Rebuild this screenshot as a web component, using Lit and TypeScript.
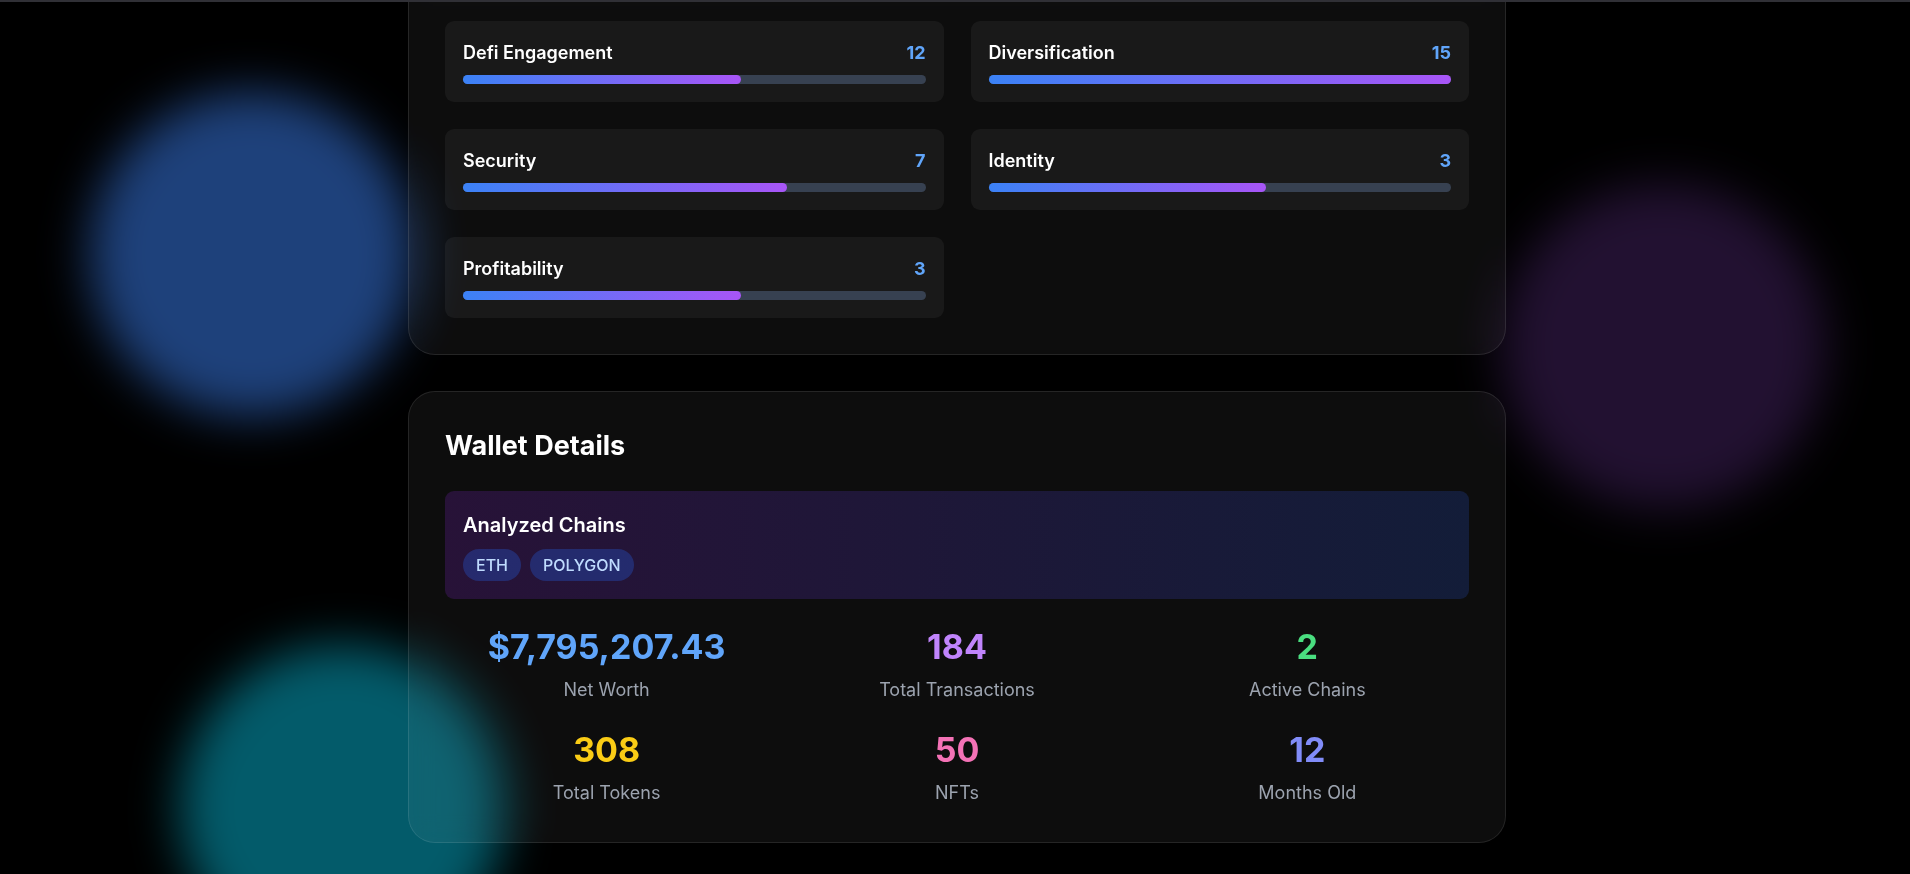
import { LitElement, html, css } from "lit";
import { customElement, property } from "lit/decorators.js";
import { classMap } from "lit/directives/class-map.js";

interface Score {
  label: string;
  value: number;
  max: number;
}

interface Stat {
  label: string;
  value: string;
  tone: string;
}

const SCORES: Score[] = [
  { label: "Defi Engagement", value: 12, max: 20 },
  { label: "Diversification", value: 15, max: 15 },
  { label: "Security", value: 7, max: 10 },
  { label: "Identity", value: 3, max: 5 },
  { label: "Profitability", value: 3, max: 5 },
];

const STATS: Stat[] = [
  { label: "Net Worth", value: "$7,795,207.43", tone: "blue" },
  { label: "Total Transactions", value: "184", tone: "purple" },
  { label: "Active Chains", value: "2", tone: "green" },
  { label: "Total Tokens", value: "308", tone: "yellow" },
  { label: "NFTs", value: "50", tone: "pink" },
  { label: "Months Old", value: "12", tone: "indigo" },
];

const CHAINS = ["ETH", "POLYGON"];

@customElement("score-tile")
class ScoreTile extends LitElement {
  @property() label = "";
  @property({ type: Number }) value = 0;
  @property({ type: Number }) max = 1;

  static styles = css`
    :host {
      display: block;
      padding: 18px;
      border-radius: 9px;
      background: rgba(255, 255, 255, 0.05);
    }
    .row {
      display: flex;
      justify-content: space-between;
      margin-bottom: 9px;
      font-size: 18px;
      line-height: 27px;
      font-weight: 600;
    }
    .name {
      margin: 0;
      font: inherit;
    }
    .value {
      color: #60a5fa;
      font-weight: 700;
    }
    .track {
      height: 9px;
      border-radius: 9px;
      background: #374151;
    }
    .fill {
      height: 100%;
      border-radius: 9px;
      background: linear-gradient(to right, #3b82f6, #a855f7);
    }
  `;

  render() {
    return html`
      <div class="row">
        <h3 class="name">${this.label}</h3>
        <span class="value">${this.value}</span>
      </div>
      <div
        class="track"
        role="progressbar"
        aria-label=${this.label}
        aria-valuenow=${this.value}
        aria-valuemax=${this.max}
      >
        <div class="fill" style="width: ${(this.value / this.max) * 100}%"></div>
      </div>
    `;
  }
}

@customElement("app-root")
class AppRoot extends LitElement {
  static styles = css`
    :host {
      display: block;
      position: relative;
      min-height: 100vh;
      box-sizing: border-box;
      overflow: hidden;
      padding-left: 4px;
      border-top: 2px solid #303036;
      background: #000;
      color: #fff;
      font-family: Inter, "Liberation Sans", sans-serif;
      font-size: 18px;
      line-height: 27px;
    }
    .glow {
      position: absolute;
      width: 324px;
      height: 324px;
      border-radius: 50%;
      filter: blur(24px);
    }
    .glow.blue {
      left: 90px;
      top: 90px;
      background: rgba(59, 130, 246, 0.5);
    }
    .glow.purple {
      right: 84px;
      top: 182px;
      background: rgba(168, 85, 247, 0.2);
    }
    .glow.cyan {
      left: 180px;
      top: 643px;
      background: rgba(6, 182, 212, 0.5);
    }
    main {
      position: relative;
      box-sizing: border-box;
      max-width: 1152px;
      margin: 0 auto;
      padding: 0 27px 31px;
      display: flex;
      flex-direction: column;
      gap: 36px;
    }
    .card {
      padding: 36px;
      border: 1px solid rgba(255, 255, 255, 0.1);
      border-radius: 27px;
      background: rgba(255, 255, 255, 0.05);
      backdrop-filter: blur(12px);
    }
    .card.scores {
      padding-top: 19px;
      border-top: 0;
      border-top-left-radius: 0;
      border-top-right-radius: 0;
    }
    .score-grid {
      display: grid;
      grid-template-columns: repeat(2, 1fr);
      gap: 27px;
    }
    h2 {
      margin: 0 0 27px;
      font-size: 27px;
      line-height: 36px;
      font-weight: 700;
    }
    .chains {
      padding: 18px;
      margin-bottom: 27px;
      border-radius: 9px;
      background: linear-gradient(
        to right,
        rgba(88, 28, 135, 0.35),
        rgba(30, 58, 138, 0.35)
      );
    }
    .chains h3 {
      margin: 0 0 8px;
      font-size: 20px;
      line-height: 32px;
      font-weight: 600;
    }
    .chain-list {
      display: flex;
      flex-wrap: wrap;
      gap: 9px;
      margin: 0;
      padding: 0;
      list-style: none;
    }
    .chain {
      padding: 4px 13px;
      border-radius: 16px;
      background: rgba(37, 99, 235, 0.3);
      color: #bfdbfe;
      font-size: 16px;
      line-height: 24px;
      font-weight: 500;
    }
    .stats {
      display: grid;
      grid-template-columns: repeat(3, 1fr);
      gap: 26px 27px;
      margin: 0;
      text-align: center;
    }
    .stat {
      display: flex;
      flex-direction: column-reverse;
      gap: 9px;
    }
    .stat dt {
      color: #9ca3af;
    }
    .stat dd {
      margin: 0;
      font-size: 34px;
      line-height: 41px;
      font-weight: 700;
    }
    .stat .blue { color: #60a5fa; }
    .stat .purple { color: #c084fc; }
    .stat .green { color: #4ade80; }
    .stat .yellow { color: #facc15; }
    .stat .pink { color: #f472b6; }
    .stat .indigo { color: #818cf8; }
  `;

  render() {
    return html`
      <div class="glow blue"></div>
      <div class="glow purple"></div>
      <div class="glow cyan"></div>
      <main>
        <section class="card scores">
          <div class="score-grid">
            ${SCORES.map(
              (s) => html`<score-tile
                .label=${s.label}
                .value=${s.value}
                .max=${s.max}
              ></score-tile>`
            )}
          </div>
        </section>
        <section class="card">
          <h2>Wallet Details</h2>
          <div class="chains">
            <h3>Analyzed Chains</h3>
            <ul class="chain-list">
              ${CHAINS.map((c) => html`<li class="chain">${c}</li>`)}
            </ul>
          </div>
          <dl class="stats">
            ${STATS.map(
              (s) => html`<div class="stat">
                <dt>${s.label}</dt>
                <dd class=${classMap({ [s.tone]: true })}>${s.value}</dd>
              </div>`
            )}
          </dl>
        </section>
      </main>
    `;
  }
}
